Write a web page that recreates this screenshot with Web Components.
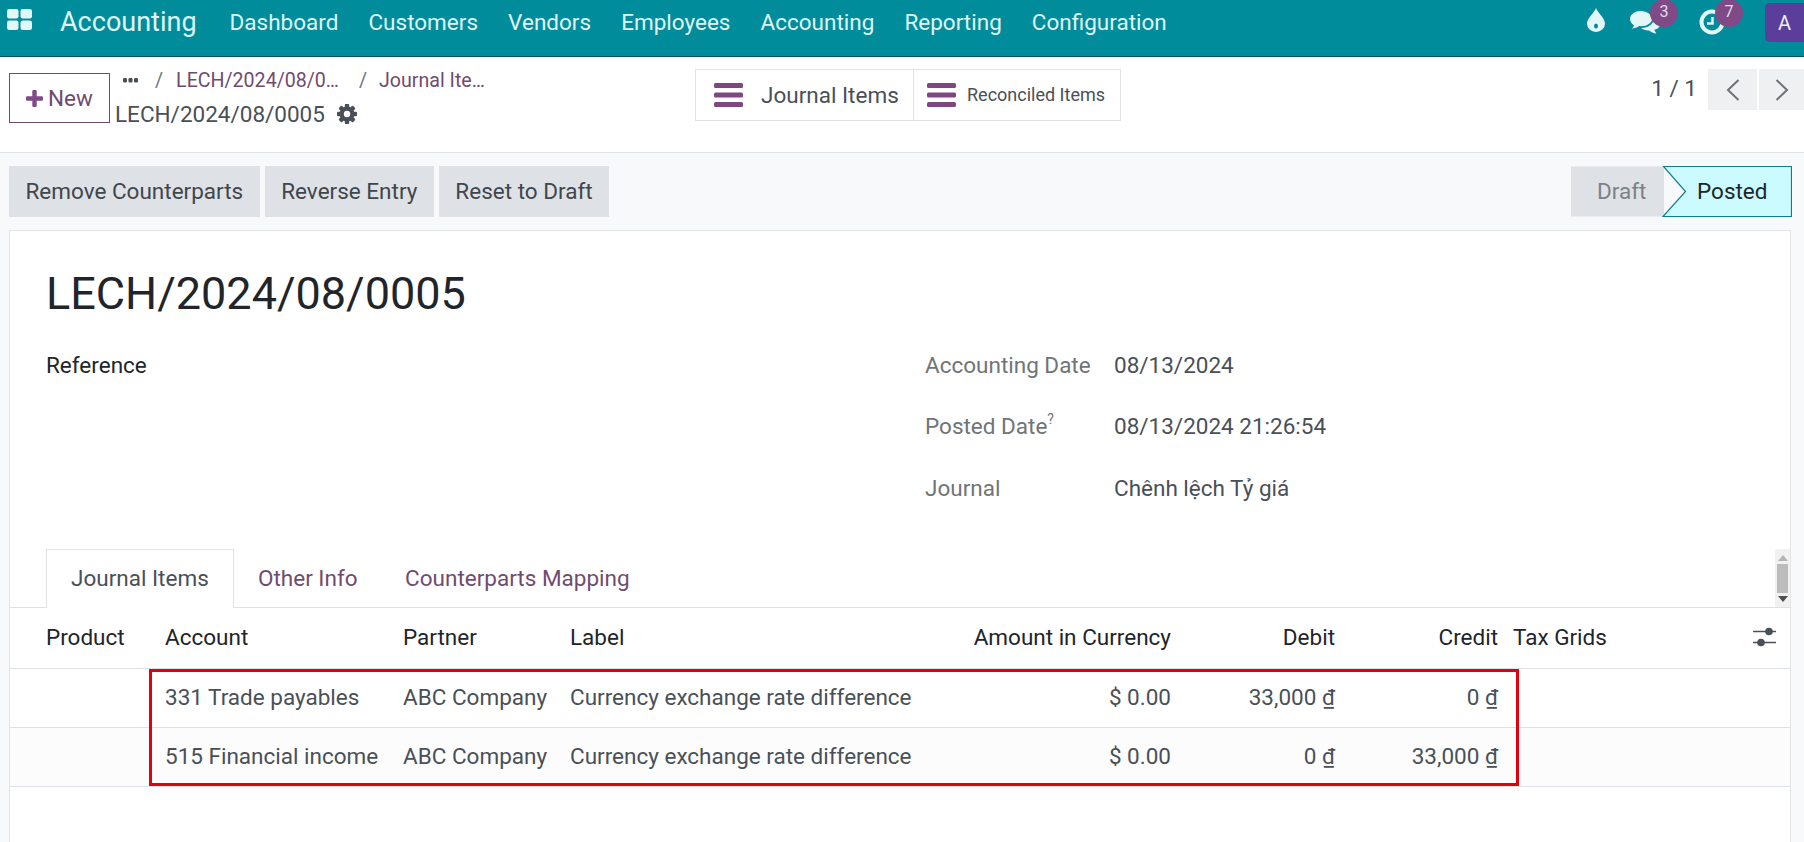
<!DOCTYPE html>
<html lang="en"><head><meta charset="utf-8"><title>Accounting</title>
<style>
html,body{margin:0;padding:0;height:842px;overflow:hidden;background:#f8f9fa;font-family:Roboto,"Noto Sans",sans-serif;font-size:22.5px;color:#495057}
body{display:flex;flex-direction:column}
</style></head><body>
<od-navbar></od-navbar>
<od-control-panel></od-control-panel>
<od-action-bar></od-action-bar>
<od-sheet></od-sheet>
<script>
function def(name,html){customElements.define(name,class extends HTMLElement{constructor(){super();this.attachShadow({mode:'open'}).innerHTML=html}})}
def('od-badge',`<style>:host{position:absolute;display:flex;align-items:center;justify-content:center;width:28px;height:28px;border-radius:50%;background:#7f4a85;color:#e6dbe8;font-size:16px;padding-bottom:4px;box-sizing:border-box}</style><slot></slot>`);
def('od-navbar',`<style>
:host{display:flex;flex:none;box-sizing:border-box;height:57px;background:#018c9b;border-bottom:1px solid #014d55;color:#dff6f8;align-items:flex-start;position:relative}
svg{display:block;flex:none}
.apps{margin:9px 0 0 7px}
.brand{font-size:27px;margin:4px 0 0 28px;line-height:36px;}
nav{display:flex;gap:30.100px;margin:6px 0 0 33px;line-height:32px}
.sys{margin-left:auto;display:flex;align-items:flex-start;height:56px}
.i{position:relative;display:block}
.av{width:39px;height:39px;margin:3px 0 0 40px;background:#5b3d9b;border-radius:5px 0 0 5px;display:flex;align-items:center;justify-content:center;font-size:20px;color:#eee}
</style>
<svg class="apps" width="25" height="21" viewBox="0 0 25 21" fill="#e3f6f8"><rect width="11.5" height="9.5" rx="2.2"/><rect x="13.5" width="11.5" height="9.5" rx="2.2"/><rect y="11.5" width="11.5" height="9.5" rx="2.2"/><rect x="13.5" y="11.5" width="11.5" height="9.5" rx="2.2"/></svg>
<div class="brand">Accounting</div>
<nav><span>Dashboard</span><span>Customers</span><span>Vendors</span><span>Employees</span><span>Accounting</span><span>Reporting</span><span>Configuration</span></nav>
<div class="sys">
<span class="i" style="margin-top:8px"><svg width="18" height="24" viewBox="0 0 18 24"><path fill="#e3f6f8" d="M9 0C10 4 18 10 18 15.500A9 8.500 0 0 1 0 15.500C0 10 8 4 9 0Z"/><ellipse cx="9" cy="18" rx="2" ry="2.600" fill="#018c9b"/></svg></span>
<span class="i" style="margin:11px 0 0 25px;width:30px"><svg width="31" height="23" viewBox="0 0 31 23"><path fill="#e3f6f8" d="M11 0C5 0 0 3.500 0 8c0 2.600 1.600 4.700 4 6.200C3.600 15.500 2.700 16.800 1.700 17.800c2.800-.3 5.600-1.300 7.500-2.700.6.100 1.200.100 1.800.100 6 0 11-3.200 11-7.200S17 0 11 0Z"/><path fill="#e3f6f8" d="M24 7c.3 5-5 10-13 10 2 1.800 5 2.500 8 2.400 1.800 1.500 4.500 2.800 7.500 3-.9-1-1.800-2.400-2.100-3.600C28 18 30 16 30 13.500 30 10.500 27.500 8 24 7Z"/></svg><od-badge style="left:20px;top:-12px">3</od-badge></span>
<span class="i" style="margin:9px 0 0 39px;width:26px"><svg width="26" height="26" viewBox="0 0 26 26"><circle cx="13" cy="13" r="10.500" fill="none" stroke="#e3f6f8" stroke-width="4"/><path d="M13.500 8v6.500H8" fill="none" stroke="#e3f6f8" stroke-width="2.500"/></svg><od-badge style="left:16px;top:-10px">7</od-badge></span>
<div class="av">A</div>
</div>`);
def('od-control-panel',`<style>
:host{display:grid;flex:none;grid-template-columns:695px 426px 1fr;box-sizing:border-box;height:96px;background:#fff;border-bottom:1px solid #dee2e6}
.left{display:flex;padding:16px 0 0 9px}
.new{box-sizing:border-box;width:101px;height:50px;border:1px solid #714b6f;color:#714b6f;display:flex;align-items:center;justify-content:center;gap:5px}
.crumbs{margin-left:5px;margin-top:-9px}
.bc{display:flex;align-items:center;height:32px;padding-left:8px;white-space:nowrap;font-size:19.600px;color:#714b6f}
.bc i{font-style:normal;color:#6c757d;margin:0 12px 0 20px}
.bc i:first-of-type{margin-left:17px;margin-right:13px}
.cur{display:flex;align-items:center;gap:12px;height:36px;color:#495057}
.sw{margin-top:12px}
.r{display:flex;justify-content:flex-end;align-items:flex-start;padding-top:12px;}
.pg{margin:6px 9px 0 0}
.b{width:49px;height:41px;background:#eff0f2;display:flex;align-items:center;justify-content:center;margin-left:2px}
.b+.b{width:45px}
svg{display:block;flex:none}
</style>
<div class="left">
<div class="new"><svg width="17" height="17" viewBox="0 0 17 17"><path fill="#7f4a85" d="M6.300 1.300Q6.300 0 7.500 0h2Q10.700 0 10.700 1.300v5h5Q17 6.300 17 7.500v2q0 1.200-1.300 1.200h-5v5q0 1.300-1.200 1.300h-2q-1.200 0-1.200-1.300v-5h-5Q0 10.700 0 9.500v-2Q0 6.300 1.300 6.300h5Z"/></svg>New</div>
<div class="crumbs">
<div class="bc"><svg width="15" height="5" viewBox="0 0 15 5" fill="#495057"><rect width="4" height="4.500" rx="1.200"/><rect x="5.500" width="4" height="4.500" rx="1.200"/><rect x="11" width="4" height="4.500" rx="1.200"/></svg><i>/</i><span>LECH/2024/08/0…</span><i>/</i><span>Journal Ite…</span></div>
<div class="cur"><span>LECH/2024/08/0005</span><svg width="20" height="20" viewBox="0 0 20 20"><g fill="#495057"><circle cx="10" cy="10" r="7.500"/><rect x="7.800" y="0" width="4.400" height="20" rx="1"/><rect x="7.800" y="0" width="4.400" height="20" rx="1" transform="rotate(45 10 10)"/><rect x="7.800" y="0" width="4.400" height="20" rx="1" transform="rotate(90 10 10)"/><rect x="7.800" y="0" width="4.400" height="20" rx="1" transform="rotate(135 10 10)"/></g><circle cx="10" cy="10" r="3.200" fill="#fff"/></svg></div>
</div>
</div>
<od-switch class="sw"></od-switch>
<div class="r"><span class="pg">1 / 1</span>
<div class="b"><svg width="14" height="24" viewBox="0 0 14 24"><path d="M12.500 2 2 12l10.500 10" fill="none" stroke="#6d7278" stroke-width="2"/></svg></div>
<div class="b"><svg width="14" height="24" viewBox="0 0 14 24"><path d="M1.500 2 12 12 1.500 22" fill="none" stroke="#6d7278" stroke-width="2"/></svg></div></div>`);
const burger=`<svg width="29" height="24" viewBox="0 0 29 24" fill="#7d4880" style="display:block;flex:none"><rect width="29" height="5" rx="1.500"/><rect y="9.500" width="29" height="5" rx="1.500"/><rect y="19" width="29" height="5" rx="1.500"/></svg>`;
def('od-switch',`<style>
:host{display:flex;box-sizing:border-box;width:426px;height:52px;border:1px solid #dee2e6;color:#495057}
div{display:flex;align-items:center;box-sizing:border-box}
.a{width:218px;border-right:1px solid #dee2e6;padding-left:18px;gap:18px}
.b{flex:1;padding-left:13px;gap:11px;font-size:18px}
.b span{margin-bottom:2px}
</style><div class="a">${burger}<span>Journal Items</span></div><div class="b">${burger}<span>Reconciled Items</span></div>`);
def('od-btn',`<style>:host{display:flex;align-items:center;box-sizing:border-box;height:51px;padding:0 16.500px 2px;background:#dee2e6;color:#3f464c}</style><slot></slot>`);
def('od-status',`<style>
:host{display:block;position:relative;width:221px;height:51px;flex:none}
svg{position:absolute;inset:0}
.d,.p{position:absolute;top:0;height:49px;display:flex;align-items:center}
.d{left:26px;color:#7c8186}.p{left:126px;color:#212529}
</style><svg width="221" height="51" viewBox="0 0 221 51"><path d="M0 .5H93V50.500H0Z" fill="#dee2e6"/><path d="M92.500 .5H220.500V50.500H92L114.500 25.500Z" fill="#cbfaff" stroke="#0f7f8c" stroke-width="1.200"/></svg><span class="d">Draft</span><span class="p">Posted</span>`);
def('od-action-bar',`<style>
:host{display:flex;flex:none;gap:5px;padding:13px 12px 0 9px;height:77px;box-sizing:border-box;align-items:flex-start}
od-status{margin-left:auto}
</style><od-btn>Remove Counterparts</od-btn><od-btn>Reverse Entry</od-btn><od-btn>Reset to Draft</od-btn><od-status></od-status>`);
def('od-sheet',`<style>
:host{display:block;flex:1;box-sizing:border-box;margin:0 13px 0 9px;background:#fff;border:1px solid #e3e6e9;border-bottom:0;position:relative}
h1{margin:0;font-weight:400;font-size:45px;line-height:62px;color:#212529;padding:32px 0 0 36px}
.form{display:grid;grid-template-columns:879px 189px 1fr;grid-auto-rows:61.500px;padding:9px 0 0 36px;align-items:center;height:215px;align-content:start}
.ref{color:#212529}
.l{color:#6f7478}
sup{font-size:14px;line-height:0;position:relative;top:-2px;vertical-align:super}
</style>
<h1>LECH/2024/08/0005</h1>
<div class="form">
<span class="ref">Reference</span><span class="l">Accounting Date</span><span>08/13/2024</span>
<span></span><span class="l">Posted Date<sup>?</sup></span><span>08/13/2024 21:26:54</span>
<span></span><span class="l">Journal</span><span>Chênh lệch Tỷ giá</span>
</div>
<od-tabs></od-tabs>
<od-table></od-table>`);
def('od-tabs',`<style>
:host{display:flex;box-sizing:border-box;height:59px;border-bottom:1px solid #dee2e6;padding-left:36px;position:relative;color:#714b6f}
span{display:flex;align-items:center;box-sizing:border-box;height:59px;padding:0 24px 2px}
.a{border:1px solid #dee2e6;border-bottom:0;background:#fff;color:#495057;height:59px;width:188px}
span:not(.a){margin-right:-.5px}
.sb{position:absolute;right:0;top:0;width:15px;height:58px;background:#f1f1f1}
.sb div{position:absolute;left:2px;top:15px;width:11px;height:29px;background:#bcbcbc}
.sb svg{position:absolute;left:2.500px}
</style><span class="a">Journal Items</span><span>Other Info</span><span>Counterparts Mapping</span>
<div class="sb"><svg style="top:6px" width="10" height="6" viewBox="0 0 10 6"><path d="M5 0l5 6H0Z" fill="#b5b5b5"/></svg><div></div><svg style="bottom:5px" width="10" height="6" viewBox="0 0 10 6"><path d="M0 0h10L5 6Z" fill="#4e4e4e"/></svg></div>`);
def('od-table',`<style>
:host{display:block;position:relative}
.row{display:grid;grid-template-columns:155px 238px 167px 601px 164px 163px 1fr;box-sizing:border-box;height:59px;padding-bottom:2px;border-bottom:1px solid #dee2e6;align-items:center;white-space:nowrap;padding-right:14px}
.row>*:first-child{padding-left:36px}
.head{height:61px;color:#212529}
.alt{background:#fcfcfd}
.n{justify-self:end}
.lab{display:flex;justify-content:space-between}
.lab b{font-weight:400}
.tg{padding-left:15px;display:flex;justify-content:space-between;align-items:center}
u{text-underline-offset:2px}
.box{position:absolute;left:139px;top:61px;width:1370px;height:117px;box-sizing:border-box;border:3px solid #e2000f}
</style>
<div class="row head"><span>Product</span><span>Account</span><span>Partner</span><span class="lab"><b>Label</b><b>Amount in Currency</b></span><span class="n">Debit</span><span class="n">Credit</span><span class="tg">Tax Grids<svg width="23" height="20" viewBox="0 0 23 20"><path d="M0 4.500h23M0 15.500h23" stroke="#495057" stroke-width="1.300"/><circle cx="16" cy="4.500" r="3.800" fill="#495057"/><circle cx="8" cy="15.500" r="3.800" fill="#495057"/></svg></span></div>
<div class="row"><span></span><span>331 Trade payables</span><span>ABC Company</span><span class="lab"><b>Currency exchange rate difference</b><b>$ 0.00</b></span><span class="n">33,000 <u>₫</u></span><span class="n">0 <u>₫</u></span><span></span></div>
<div class="row alt"><span></span><span>515 Financial income</span><span>ABC Company</span><span class="lab"><b>Currency exchange rate difference</b><b>$ 0.00</b></span><span class="n">0 <u>₫</u></span><span class="n">33,000 <u>₫</u></span><span></span></div>
<div class="box"></div>`);
</script>
</body></html>
